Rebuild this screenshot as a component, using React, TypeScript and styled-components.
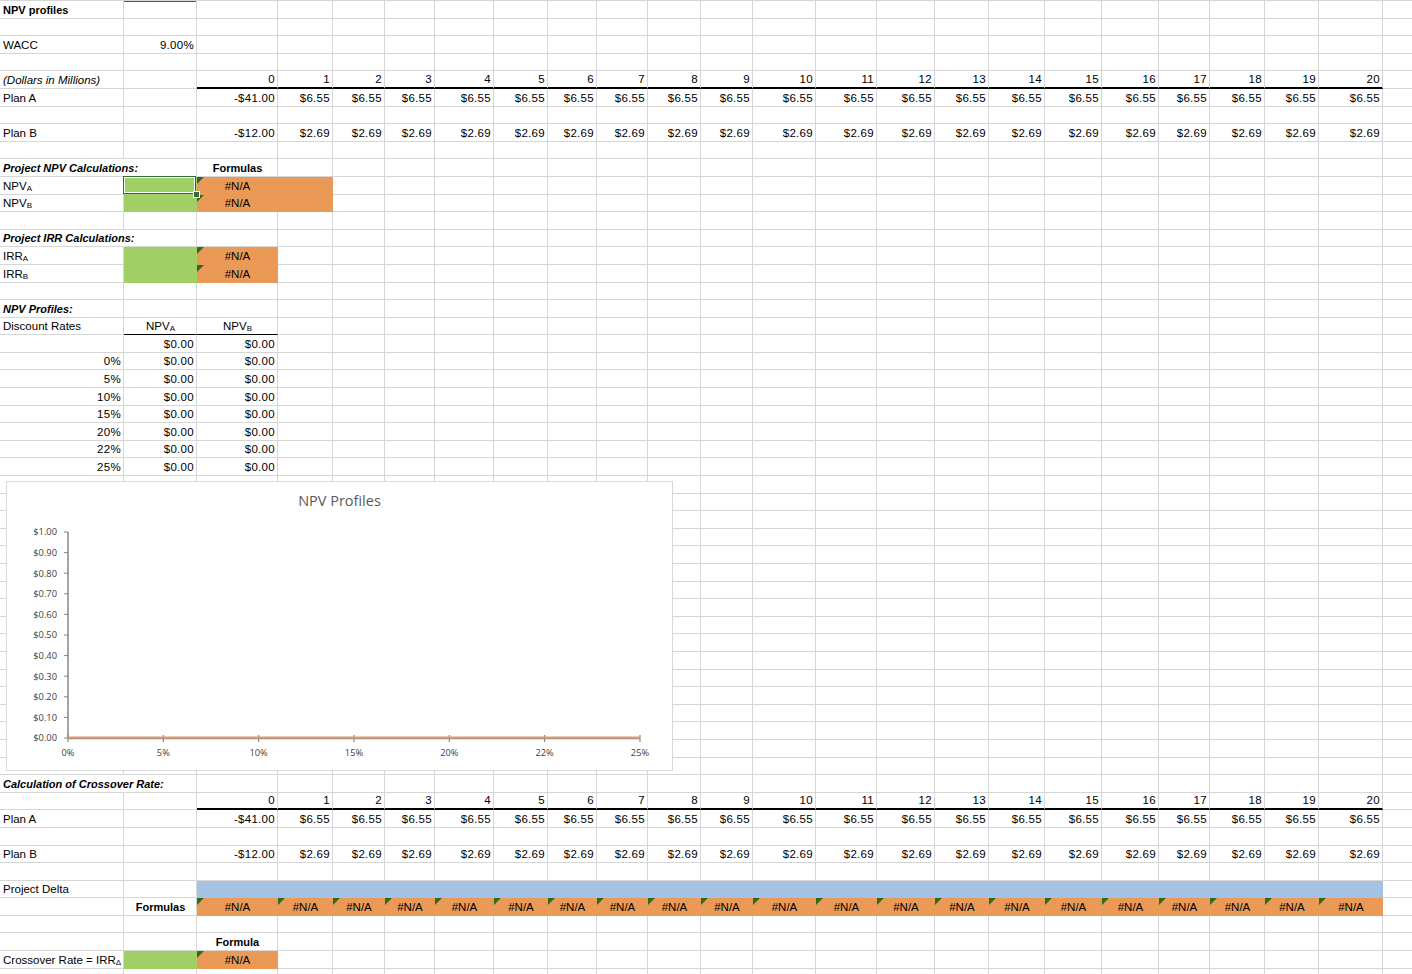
import React from 'react';
import styled, { createGlobalStyle, css } from 'styled-components';

// column widths (px) of the sheet, A..X
const COLS = [124, 73, 81, 55, 52, 50, 59, 54, 49, 51, 53, 52, 63, 61, 58, 54, 56, 57, 57, 51, 55, 54, 64, 60];
const ROWS = 56;
const ROW_H = 17.6;

const FILL = {
  green: '#a0d065',
  orange: '#ea9a56',
  blue: '#a4c2e4',
};
type Fill = keyof typeof FILL;
const GRID = '#d6d6d6';
const SELECT = '#2f6b3c';

type CellSpec = {
  text?: React.ReactNode;
  align?: 'left' | 'right' | 'center';
  bold?: boolean;
  italic?: boolean;
  num?: boolean;
  fill?: Fill;
  flag?: boolean;
  rule?: 'thick' | 'thin';
  spill?: boolean;
  selected?: boolean;
  mark?: boolean;
};

const GlobalStyle = createGlobalStyle`
  html, body {
    margin: 0;
    padding: 0;
    background: #fff;
  }
  body {
    font-family: "Liberation Sans", Arial, sans-serif;
    color: #000;
  }
`;

const Page = styled.div`
  position: relative;
  width: 1412px;
  height: 974px;
  overflow: hidden;
`;

const Sheet = styled.div`
  display: grid;
  grid-template-columns: ${COLS.map((w) => `${w}px`).join(' ')};
  grid-auto-rows: ${ROW_H}px;
  border-top: 1px solid ${GRID};
`;

const Cell = styled.div<{
  $align: 'left' | 'right' | 'center';
  $bold?: boolean;
  $italic?: boolean;
  $num?: boolean;
  $fill?: Fill;
  $flag?: boolean;
  $rule?: 'thick' | 'thin';
  $spill?: boolean;
  $selected?: boolean;
  $mark?: boolean;
}>`
  position: relative;
  box-sizing: border-box;
  display: flex;
  align-items: flex-end;
  justify-content: ${(p) => (p.$align === 'right' ? 'flex-end' : p.$align === 'center' ? 'center' : 'flex-start')};
  padding: 0 2px 1px 3px;
  white-space: nowrap;
  font-size: ${(p) => (p.$bold ? '11px' : '11.5px')};
  line-height: 14px;
  font-weight: ${(p) => (p.$bold ? 700 : 400)};
  font-style: ${(p) => (p.$italic ? 'italic' : 'normal')};
  letter-spacing: ${(p) => (p.$num ? '0.3px' : '0')};
  background: ${(p) => (p.$fill ? FILL[p.$fill] : 'transparent')};
  border-right: 1px solid ${(p) => (p.$fill ? FILL[p.$fill] : p.$spill ? 'transparent' : GRID)};
  border-bottom: ${(p) =>
    p.$rule === 'thick'
      ? '2px solid #000'
      : p.$rule === 'thin'
      ? '1px solid #000'
      : `1px solid ${p.$fill ? FILL[p.$fill] : GRID}`};
  ${(p) =>
    p.$mark &&
    css`
      box-shadow: inset 0 1px 0 ${SELECT};
    `}
  ${(p) =>
    p.$flag &&
    css`
      &::before {
        content: '';
        position: absolute;
        top: 0;
        left: 0;
        border-top: 7px solid #2f6b1f;
        border-right: 7px solid transparent;
      }
    `}
  ${(p) =>
    p.$selected &&
    css`
      z-index: 2;
      &::before {
        content: '';
        position: absolute;
        inset: -1px 0 0 -1px;
        border: 1px solid ${SELECT};
        box-shadow: inset 0 0 0 1px #fff;
      }
      &::after {
        content: '';
        position: absolute;
        right: -4px;
        bottom: -4px;
        width: 5px;
        height: 5px;
        background: ${SELECT};
        border: 1px solid #fff;
      }
    `}
`;

// the cell's text run, so subscripts sit inline on the baseline
const Value = styled.span`
  display: block;
`;

const Sub = styled.span`
  font-size: 8px;
  vertical-align: -1px;
  letter-spacing: 0;
  line-height: 0;
`;

// ---- sheet content ----
const sheet = new Map<string, CellSpec>();
const put = (r: number, c: number, s: CellSpec) => {
  const key = `${r}:${c}`;
  sheet.set(key, { ...sheet.get(key), ...s });
};

const years = Array.from({ length: 21 }, (_, i) => i);

const cashFlows = (h: number) => {
  years.forEach((y) => {
    put(h, 2 + y, { text: String(y), align: 'right', num: true, rule: 'thick' });
    put(h + 1, 2 + y, { text: y === 0 ? '-$41.00' : '$6.55', align: 'right', num: true });
    put(h + 3, 2 + y, { text: y === 0 ? '-$12.00' : '$2.69', align: 'right', num: true });
  });
  put(h + 1, 0, { text: 'Plan A' });
  put(h + 3, 0, { text: 'Plan B' });
};

const na = (r: number, c: number) => put(r, c, { text: '#N/A', align: 'center', fill: 'orange', flag: true });

put(1, 0, { text: 'NPV profiles', bold: true });
put(1, 1, { mark: true });
put(3, 0, { text: 'WACC' });
put(3, 1, { text: '9.00%', align: 'right', num: true });
put(5, 0, { text: '(Dollars in Millions)', italic: true });
cashFlows(5);

put(10, 0, { text: 'Project NPV Calculations:', bold: true, italic: true, spill: true });
put(10, 2, { text: 'Formulas', bold: true, align: 'center' });
put(11, 0, { text: <>NPV<Sub>A</Sub></> });
put(12, 0, { text: <>NPV<Sub>B</Sub></> });
put(11, 1, { fill: 'green', selected: true });
put(12, 1, { fill: 'green' });
na(11, 2);
na(12, 2);
put(11, 3, { fill: 'orange' });
put(12, 3, { fill: 'orange' });

put(14, 0, { text: 'Project IRR Calculations:', bold: true, italic: true, spill: true });
put(15, 0, { text: <>IRR<Sub>A</Sub></> });
put(16, 0, { text: <>IRR<Sub>B</Sub></> });
put(15, 1, { fill: 'green' });
put(16, 1, { fill: 'green' });
na(15, 2);
na(16, 2);

put(18, 0, { text: 'NPV Profiles:', bold: true, italic: true });
put(19, 0, { text: 'Discount Rates' });
put(19, 1, { text: <>NPV<Sub>A</Sub></>, align: 'center', rule: 'thin' });
put(19, 2, { text: <>NPV<Sub>B</Sub></>, align: 'center', rule: 'thin' });
['', '0%', '5%', '10%', '15%', '20%', '22%', '25%'].forEach((rate, i) => {
  if (rate) put(20 + i, 0, { text: rate, align: 'right', num: true });
  put(20 + i, 1, { text: '$0.00', align: 'right', num: true });
  put(20 + i, 2, { text: '$0.00', align: 'right', num: true });
});

put(45, 0, { text: 'Calculation of Crossover Rate:', bold: true, italic: true, spill: true });
cashFlows(46);
put(51, 0, { text: 'Project Delta' });
put(52, 1, { text: 'Formulas', bold: true, align: 'center' });
years.forEach((y) => {
  put(51, 2 + y, { fill: 'blue' });
  na(52, 2 + y);
});
put(54, 2, { text: 'Formula', bold: true, align: 'center' });
put(55, 0, { text: <>Crossover Rate = IRR<Sub>Δ</Sub></> });
put(55, 1, { fill: 'green' });
na(55, 2);

// ---- chart (floats over the grid) ----
const ChartBox = styled.div`
  position: absolute;
  left: 6px;
  top: 481px;
  width: 667px;
  height: 290px;
  box-sizing: border-box;
  border: 1px solid #d9d9d9;
  background: #fff;
  display: flex;
  flex-direction: column;
  z-index: 3;
`;

const ChartTitle = styled.div`
  padding-top: 9px;
  height: 20px;
  line-height: 20px;
  text-align: center;
  font-family: "Open Sans", "Noto Sans", sans-serif;
  font-size: 14.5px;
  color: #595959;
`;

const Plot = styled.svg`
  display: block;
  font-family: "Open Sans", "Noto Sans", sans-serif;
  font-size: 9.3px;
  fill: #404040;
`;

const Y_TOP = 50;
const Y_BOT = 256;
const X0 = 61;
const STEP = 95.33;
const xLabels = ['0%', '5%', '10%', '15%', '20%', '22%', '25%'];
const yLabels = Array.from({ length: 11 }, (_, i) => `$${(1 - i / 10).toFixed(2)}`);

const NpvChart: React.FC = () => {
  const xEnd = X0 + STEP * (xLabels.length - 1);
  return (
    <ChartBox>
      <ChartTitle>NPV Profiles</ChartTitle>
      <Plot width={665} height={259} viewBox="0 29 665 259">
        {yLabels.map((label, i) => {
          const y = Y_TOP + ((Y_BOT - Y_TOP) / 10) * i;
          return (
            <g key={label}>
              <line x1={X0 - 4} x2={X0} y1={y} y2={y} stroke="#868686" strokeWidth={1} />
              <text x={50} y={y + 3.3} textAnchor="end">
                {label}
              </text>
            </g>
          );
        })}
        <line x1={X0} x2={X0} y1={Y_TOP} y2={Y_BOT} stroke="#868686" strokeWidth={1.5} />
        <line x1={X0} x2={xEnd} y1={Y_BOT + 0.5} y2={Y_BOT + 0.5} stroke="#8a8a8a" strokeWidth={1.5} />
        {xLabels.map((label, i) => {
          const x = X0 + STEP * i;
          return (
            <g key={label}>
              <line x1={x} x2={x} y1={Y_BOT - 3} y2={Y_BOT + 4} stroke="#868686" strokeWidth={1.2} />
              <text x={x} y={274} textAnchor="middle">
                {label}
              </text>
            </g>
          );
        })}
        <line x1={X0} x2={xEnd} y1={Y_BOT - 0.5} y2={Y_BOT - 0.5} stroke="#dd9a70" strokeWidth={2} />
      </Plot>
    </ChartBox>
  );
};

const App: React.FC = () => {
  const cells: React.ReactNode[] = [];
  for (let r = 1; r <= ROWS; r++) {
    COLS.forEach((_, c) => {
      const s = sheet.get(`${r}:${c}`) || {};
      cells.push(
        <Cell
          key={`${r}:${c}`}
          $align={s.align || 'left'}
          $bold={s.bold}
          $italic={s.italic}
          $num={s.num}
          $fill={s.fill}
          $flag={s.flag}
          $rule={s.rule}
          $spill={s.spill}
          $selected={s.selected}
          $mark={s.mark}
        >
          {s.text !== undefined && <Value>{s.text}</Value>}
        </Cell>
      );
    });
  }

  return (
    <Page>
      <GlobalStyle />
      <Sheet>{cells}</Sheet>
      <NpvChart />
    </Page>
  );
};

export default App;
